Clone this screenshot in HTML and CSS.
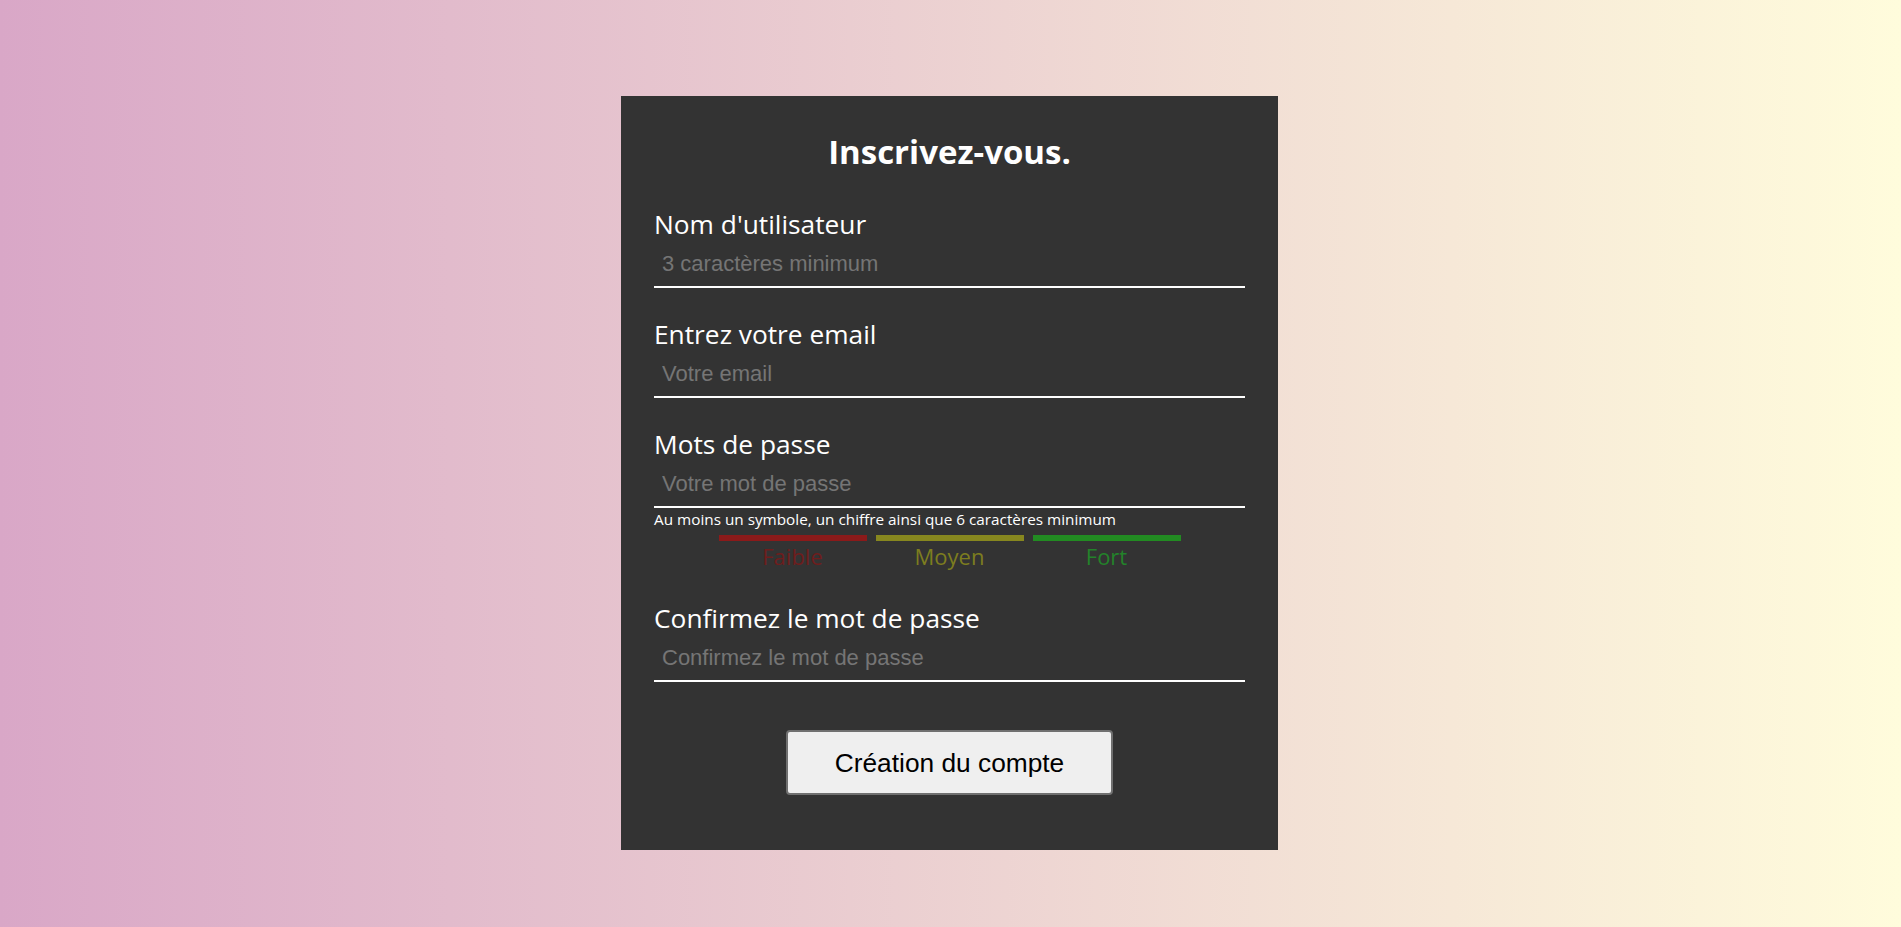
FILE: index.html
```html
<!DOCTYPE html>
<html lang="fr">
<head>
<meta charset="utf-8">
<title>Inscription</title>
<link rel="stylesheet" href="styles.css">
</head>
<body>
<main class="page">
  <form class="card">
    <h1 class="title">Inscrivez-vous.</h1>

    <div class="field">
      <label class="label" for="user">Nom d'utilisateur</label>
      <input class="input" id="user" type="text" placeholder="3 caractères minimum">
    </div>

    <div class="field">
      <label class="label" for="mail">Entrez votre email</label>
      <input class="input" id="mail" type="email" placeholder="Votre email">
    </div>

    <div class="field field-pass">
      <label class="label" for="pass">Mots de passe</label>
      <input class="input" id="pass" type="password" placeholder="Votre mot de passe">
      <p class="hint">Au moins un symbole, un chiffre ainsi que 6 caractères minimum</p>
      <div class="strength">
        <div class="level level-weak"><span class="bar"></span><span class="level-label">Faible</span></div>
        <div class="level level-mid"><span class="bar"></span><span class="level-label">Moyen</span></div>
        <div class="level level-strong"><span class="bar"></span><span class="level-label">Fort</span></div>
      </div>
    </div>

    <div class="field field-confirm">
      <label class="label" for="confirm">Confirmez le mot de passe</label>
      <input class="input" id="confirm" type="password" placeholder="Confirmez le mot de passe">
    </div>

    <button class="submit" type="button">Création du compte</button>
  </form>
</main>
</body>
</html>
```

FILE: styles.css
```css
* {
  box-sizing: border-box;
}

html, body {
  margin: 0;
  padding: 0;
}

body {
  min-height: 100vh;
  background: linear-gradient(to right, #d9a7c7, #fffcdc);
  font-family: "Open Sans", "DejaVu Sans", sans-serif;
}

.page {
  display: flex;
  justify-content: center;
  padding: 96px 2px 0 0;
  min-height: 100vh;
}

.card {
  width: 657px;
  height: 754px;
  background: #333333;
  padding: 36px 33px 54px;
  display: flex;
  flex-direction: column;
}

.title {
  margin: 0 0 36px;
  font-size: 33px;
  line-height: 40px;
  font-weight: 700;
  color: #ffffff;
  text-align: center;
}

.field {
  display: flex;
  flex-direction: column;
  margin-bottom: 30px;
}

.field-pass {
  margin-bottom: 33px;
}

.label {
  font-size: 26.3px;
  line-height: 32px;
  color: #ffffff;
}

.input {
  display: block;
  width: 100%;
  height: 48px;
  margin: 0;
  padding: 2px 8px 0;
  border: 0;
  border-bottom: 2px solid #ffffff;
  background: transparent;
  color: #ffffff;
  font-family: "Liberation Sans", Arial, sans-serif;
  font-size: 22px;
  outline: none;
}

.input::placeholder {
  color: #757575;
  opacity: 1;
}

.hint {
  margin: 1px 0 0;
  font-size: 15.3px;
  line-height: 20px;
  color: #ffffff;
}

.strength {
  display: flex;
  justify-content: center;
  gap: 9px;
  margin-top: 6px;
}

.level {
  width: 148px;
  display: flex;
  flex-direction: column;
  align-items: center;
}

.bar {
  display: block;
  width: 100%;
  height: 6px;
}

.level-label {
  margin-top: 2px;
  font-size: 22px;
  line-height: 26px;
}

.level-weak .bar { background: #8b1a1a; }
.level-weak .level-label { color: #6e1d1d; }

.level-mid .bar { background: #87871f; }
.level-mid .level-label { color: #7d7d1f; }

.level-strong .bar { background: #228b22; }
.level-strong .level-label { color: #23822a; }

.field-confirm {
  margin-bottom: 48px;
}

.submit {
  align-self: center;
  width: 327px;
  height: 65px;
  margin: 0;
  padding: 2px 0 0;
  background: #efefef;
  border: 2px solid #707070;
  border-radius: 4px;
  color: #000000;
  font-family: "Liberation Sans", Arial, sans-serif;
  font-size: 26.3px;
  cursor: pointer;
}
```
